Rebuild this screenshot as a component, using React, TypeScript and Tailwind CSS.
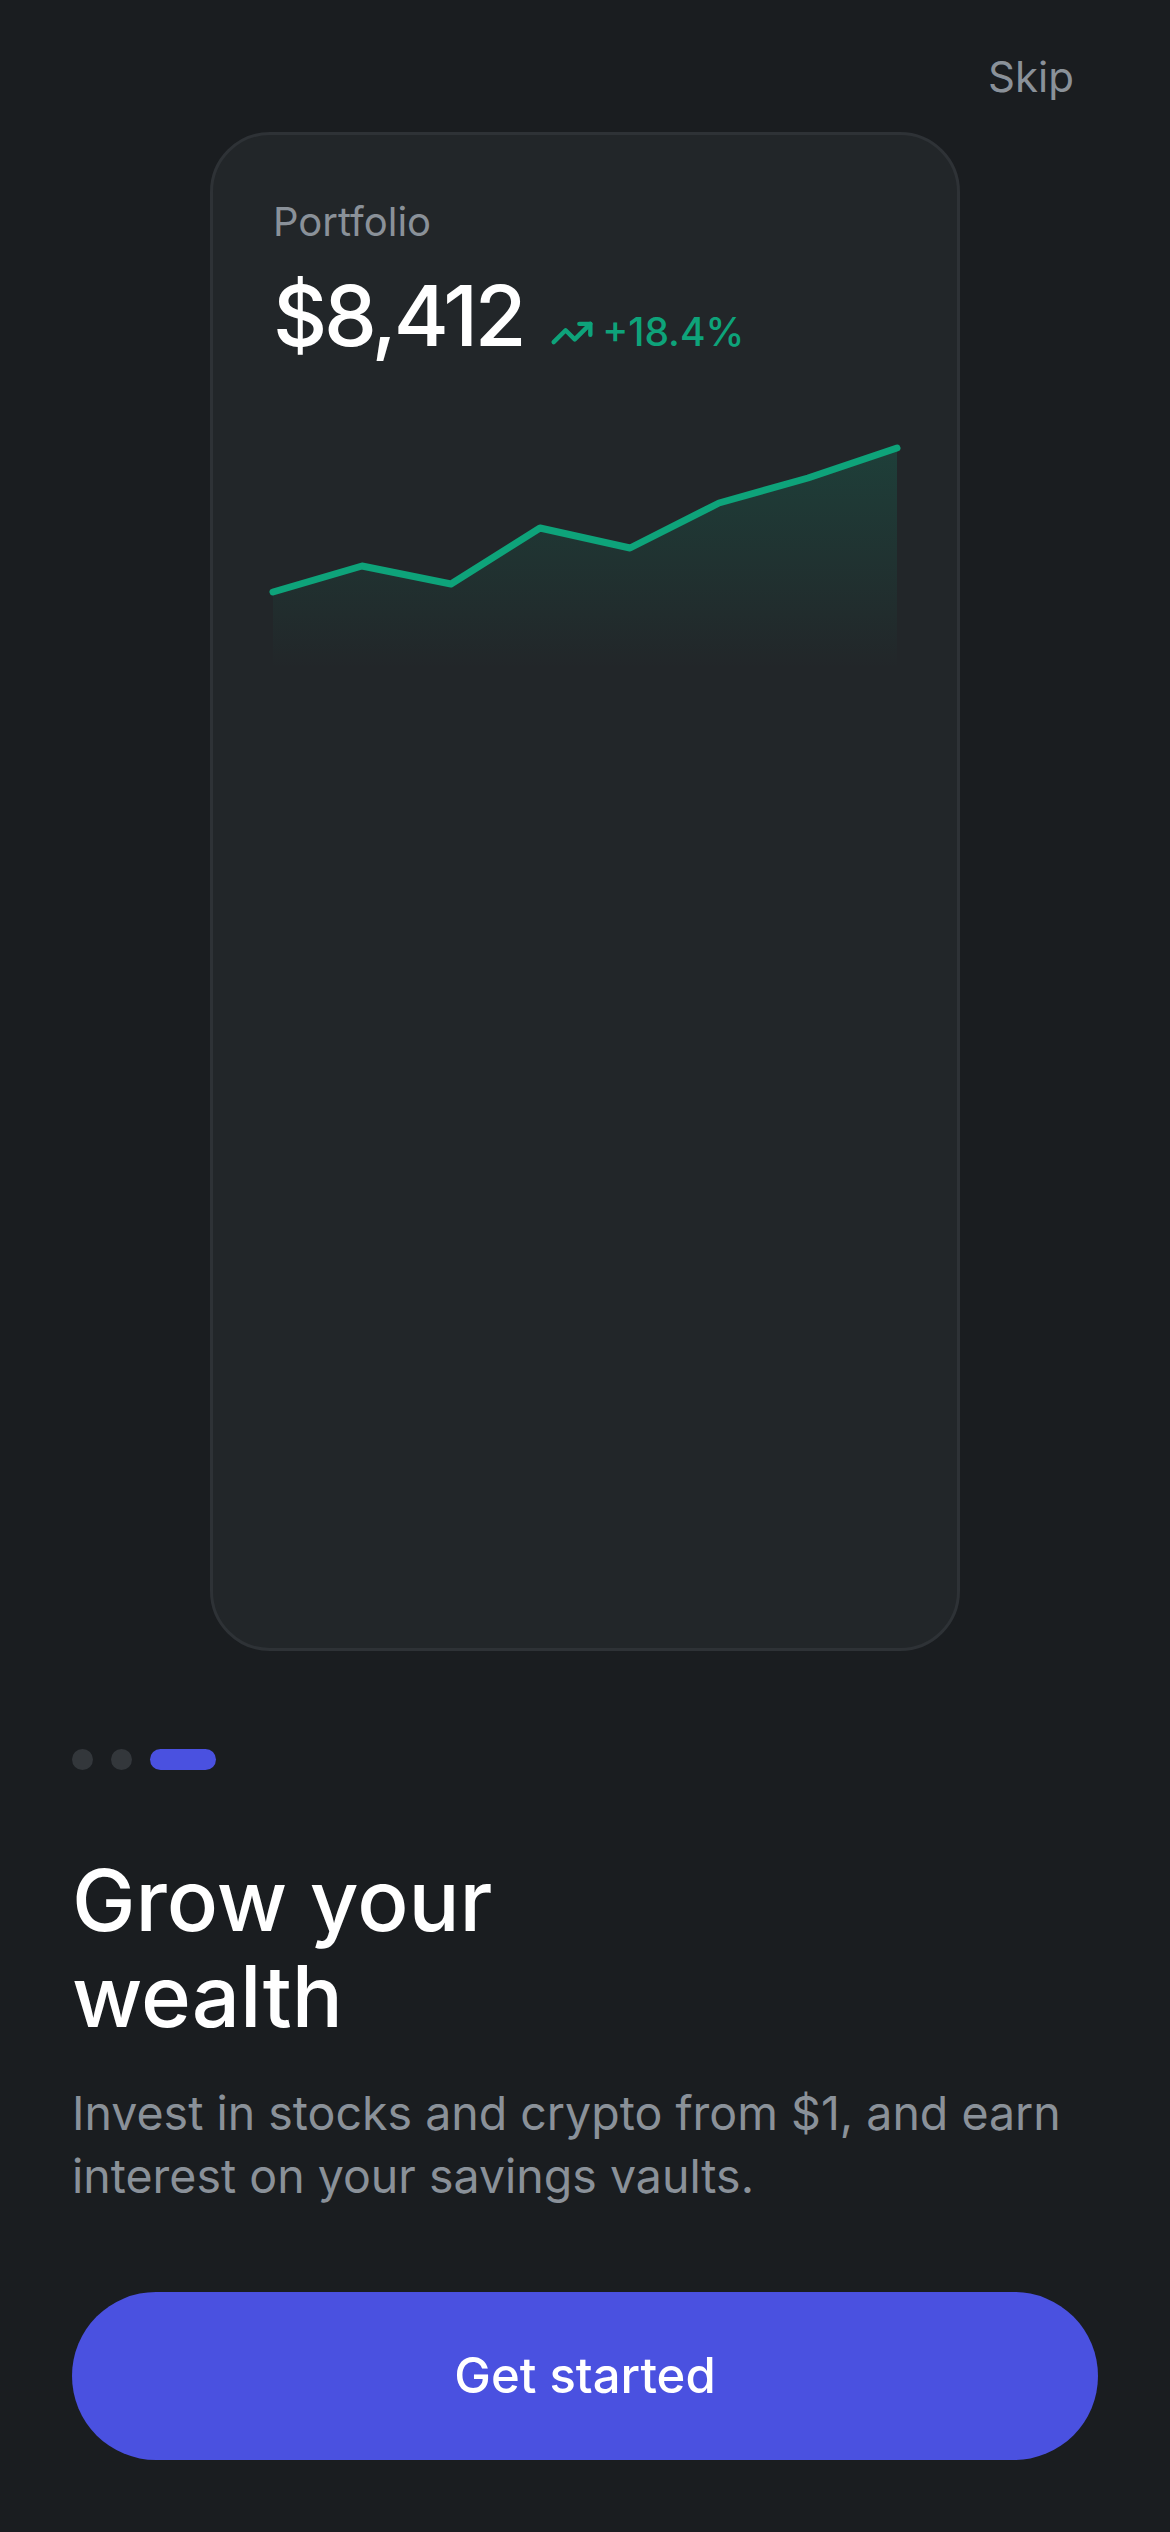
import React from "react";

const points: [number, number][] = [
  [0, 173],
  [89, 147],
  [178, 165],
  [267, 109],
  [357, 129],
  [446, 84],
  [535, 59],
  [624, 29],
];

function PortfolioChart() {
  const line = points.map(([x, y], i) => `${i === 0 ? "M" : "L"}${x} ${y}`).join(" ");
  const area = `${line} L624 250 L0 250 Z`;
  return (
    <svg className="mt-[55px] block overflow-visible" width="624" height="250" viewBox="0 0 624 250">
      <defs>
        <linearGradient id="chartFill" x1="0" y1="0" x2="0" y2="1">
          <stop offset="0%" stopColor="#0ea37a" stopOpacity="0.2" />
          <stop offset="100%" stopColor="#0ea37a" stopOpacity="0" />
        </linearGradient>
      </defs>
      <path d={area} fill="url(#chartFill)" />
      <path d={line} fill="none" stroke="#0ea37a" strokeWidth="7" strokeLinecap="round" strokeLinejoin="round" />
    </svg>
  );
}

export default function App() {
  return (
    <div className="min-h-screen w-full bg-[#1a1d20] font-['Inter',sans-serif]">
      {/* Top bar */}
      <header className="flex h-[132px] items-start justify-end pt-[47px] pr-[96px]">
        <button className="h-[60px] text-[42px] leading-[60px] text-[#8a9199]">Skip</button>
      </header>

      {/* Preview card */}
      <div className="mx-auto h-[1519px] w-[750px] rounded-[60px] border-[3px] border-[#2e3236] bg-[#222629] px-[60px] pt-[57px]">
        <p className="text-[40px] leading-[60px] text-[#8a9199]">Portfolio</p>
        <div className="mt-[16px] flex items-baseline gap-[27px]">
          <span className="text-[84px] font-medium leading-[96px] tracking-[-0.04em] text-white">$8,412</span>
          <span className="text-[39px] font-medium leading-[60px] text-[#0ea37a]">
            <svg
              className="mr-[8px] inline-block align-[-9px]"
              width="44"
              height="44"
              viewBox="0 0 24 24"
              fill="none"
              stroke="currentColor"
              strokeWidth="2.4"
              strokeLinecap="round"
              strokeLinejoin="round"
            >
              <polyline points="22 7 13.5 15.5 8.5 10.5 2 17" />
              <polyline points="16 7 22 7 22 13" />
            </svg>
            +18.4%
          </span>
        </div>
        <PortfolioChart />
      </div>

      {/* Pager dots */}
      <div className="mt-[98px] flex gap-[18px] px-[72px]">
        <span className="h-[21px] w-[21px] rounded-full bg-[#33373b]" />
        <span className="h-[21px] w-[21px] rounded-full bg-[#33373b]" />
        <span className="h-[21px] w-[66px] rounded-full bg-[#4a51e0]" />
      </div>

      {/* Copy */}
      <div className="px-[72px]">
        <h1 className="mt-[83px] text-[85px] font-medium leading-[96px] text-white">
          Grow your
          <br />
          wealth
        </h1>
        <p className="mt-[37px] text-[46.5px] leading-[63px] text-[#8a9199]">
          Invest in stocks and crypto from $1, and earn interest on your savings vaults.
        </p>
      </div>

      <div className="px-[72px] pt-[84px]">
        <button className="flex h-[168px] w-full items-center justify-center rounded-full bg-[#4a51e0] text-[49px] font-medium text-white">
          Get started
        </button>
      </div>
    </div>
  );
}
